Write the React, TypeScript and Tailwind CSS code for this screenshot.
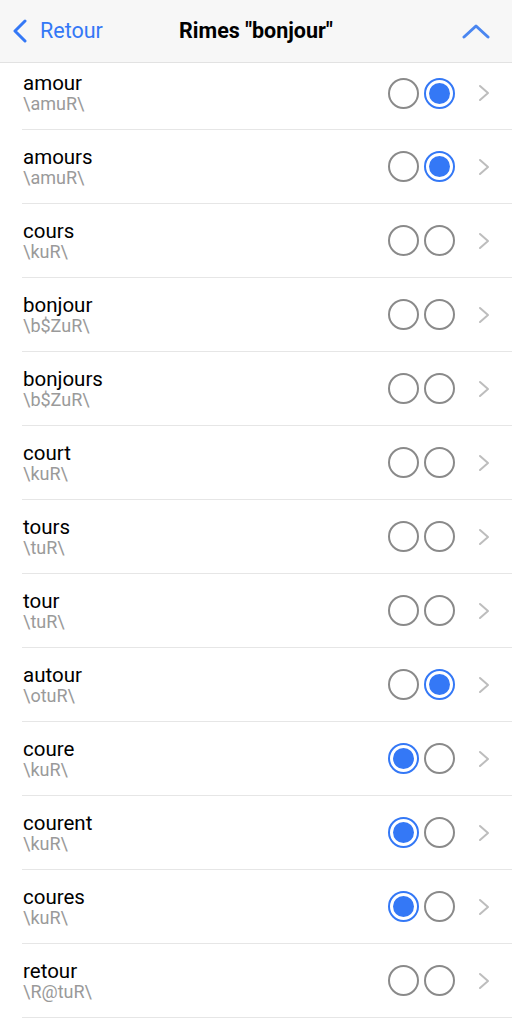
import React from "react";

type Row = { w: string; p: string; a: boolean; b: boolean };

const rows: Row[] = [
  { w: "amour", p: "\\amuR\\", a: false, b: true },
  { w: "amours", p: "\\amuR\\", a: false, b: true },
  { w: "cours", p: "\\kuR\\", a: false, b: false },
  { w: "bonjour", p: "\\b$ZuR\\", a: false, b: false },
  { w: "bonjours", p: "\\b$ZuR\\", a: false, b: false },
  { w: "court", p: "\\kuR\\", a: false, b: false },
  { w: "tours", p: "\\tuR\\", a: false, b: false },
  { w: "tour", p: "\\tuR\\", a: false, b: false },
  { w: "autour", p: "\\otuR\\", a: false, b: true },
  { w: "coure", p: "\\kuR\\", a: true, b: false },
  { w: "courent", p: "\\kuR\\", a: true, b: false },
  { w: "coures", p: "\\kuR\\", a: true, b: false },
  { w: "retour", p: "\\R@tuR\\", a: false, b: false },
];

function Radio({ on }: { on: boolean }) {
  return on ? (
    <div className="w-[31px] h-[31px] rounded-full border-2 border-[#3478f6] flex items-center justify-center">
      <div className="w-[21px] h-[21px] rounded-full bg-[#3478f6]" />
    </div>
  ) : (
    <div className="w-[31px] h-[31px] rounded-full border-2 border-[#8a8a8a]" />
  );
}

export default function App() {
  return (
    <div
      className="w-[512px] h-[1019px] bg-white overflow-hidden"
      style={{ fontFamily: "Roboto, 'Liberation Sans', sans-serif" }}
    >
      <div className="h-[63px] bg-[#f7f7f7] border-b border-[#e2e2e2] flex items-center px-[12px]">
        <div className="flex items-center gap-[12px] w-[120px]">
          <svg width="16" height="24" viewBox="0 0 16 24" fill="none">
            <path d="M13 2 L3 12 L13 22" stroke="#3478f6" strokeWidth="3" strokeLinecap="round" strokeLinejoin="round" />
          </svg>
          <span className="text-[21.5px] text-[#3478f6] leading-none">Retour</span>
        </div>
        <div className="flex-1 text-center text-[21.5px] font-bold text-black leading-none">Rimes "bonjour"</div>
        <div className="w-[120px] flex justify-end pr-[10px]">
          <svg width="28" height="16" viewBox="0 0 28 16" fill="none">
            <path d="M2 14 L14 3 L26 14" stroke="#4a86f0" strokeWidth="3" strokeLinecap="round" strokeLinejoin="round" />
          </svg>
        </div>
      </div>
      <div className="pl-[22px]">
        {rows.map((r, i) => (
          <div
            key={i}
            className={`flex items-center border-b border-[#e6e6e6] pr-[22px] ${i === 0 ? "h-[67px] pb-[6px]" : "h-[74px]"}`}
          >
            <div className="flex-1 flex flex-col pl-[1px]">
              <span className="text-[20.5px] text-black leading-[22px]">{r.w}</span>
              <span className="text-[18px] text-[#9a9a9a] leading-[20px]">{r.p}</span>
            </div>
            <div className="flex items-center gap-[5px]">
              <Radio on={r.a} />
              <Radio on={r.b} />
            </div>
            <div className="ml-[23px]">
              <svg width="12" height="18" viewBox="0 0 12 18" fill="none">
                <path d="M2 2 L10 9 L2 16" stroke="#bdbdbd" strokeWidth="2" strokeLinecap="round" strokeLinejoin="round" />
              </svg>
            </div>
          </div>
        ))}
      </div>
    </div>
  );
}
